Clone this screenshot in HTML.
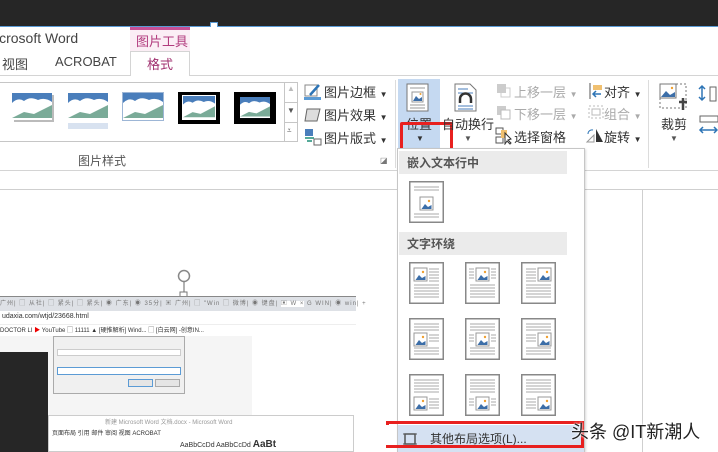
<!DOCTYPE html>
<html><head><meta charset="utf-8"><style>
*{margin:0;padding:0;box-sizing:border-box}
body{width:718px;height:452px;overflow:hidden;background:#fff;position:relative;font-family:"Liberation Sans","Noto Sans CJK SC",sans-serif;color:#444;font-size:12px}
.a{position:absolute}
.t{position:absolute;white-space:nowrap}
.pi{position:absolute;width:35px;height:42px}
</style></head><body>
<div class="a" style="left:0;top:0;width:718px;height:26px;background:#262626"></div>
<div class="a" style="left:0;top:26px;width:718px;height:1px;background:#5b9bd5"></div>
<div class="a" style="left:210px;top:22px;width:8px;height:8px;border:1px solid #5b9bd5;background:#fff"></div>
<div class="a" style="left:0;top:27px;width:718px;height:48px;background:#fff"></div>
<div class="t" style="left:-4px;top:30px;font-size:14px;color:#444">icrosoft Word</div>
<div class="a" style="left:130px;top:27px;width:60px;height:3px;background:#c64f95"></div>
<div class="a" style="left:130px;top:30px;width:60px;height:22px;background:#fbeef5"></div>
<div class="t" style="left:136px;top:31px;font-size:13px;color:#b23c7e">图片工具</div>
<div class="t" style="left:2px;top:54px;font-size:13px">视图</div>
<div class="t" style="left:55px;top:54px;font-size:13px">ACROBAT</div>
<div class="a" style="left:130px;top:51px;width:60px;height:25px;background:#fff;border:1px solid #d4d4d4;border-bottom:none"></div>
<div class="t" style="left:147px;top:54px;font-size:13px;color:#a0306f">格式</div>
<div class="a" style="left:0;top:75px;width:130px;height:1px;background:#d4d4d4"></div>
<div class="a" style="left:190px;top:75px;width:528px;height:1px;background:#d4d4d4"></div>
<div class="a" style="left:0;top:170px;width:718px;height:1px;background:#d4d4d4"></div>
<div class="a" style="left:0;top:189px;width:718px;height:1px;background:#cfcfcf"></div>
<!-- gallery -->
<div class="a" style="left:0;top:82px;width:298px;height:60px;border:1px solid #c6c6c6;border-left:none"></div>
<div class="a" style="left:284px;top:82px;width:1px;height:60px;background:#c6c6c6"></div>
<div class="a" style="left:285px;top:102px;width:13px;height:1px;background:#c6c6c6"></div>
<div class="a" style="left:285px;top:122px;width:13px;height:1px;background:#c6c6c6"></div>
<div class="t" style="left:287px;top:84px;font-size:8px;color:#bbb">▲</div>
<div class="t" style="left:287px;top:106px;font-size:8px;color:#555">▼</div>
<div class="t" style="left:287px;top:126px;font-size:8px;color:#555">⩡</div>
<svg class="a" style="left:10px;top:92px" width="270" height="40">
<defs><g id="ph"><rect width="40" height="27" fill="#4a7ebb"/><path d="M0 10 Q6 4 12 8 Q18 3 26 7 Q33 4 40 9 V27 H0Z" fill="#fff"/><path d="M0 25 L12 19 L22 21 L40 12 V25Z" fill="#7aab98"/></g></defs>
<g transform="translate(2,1)"><rect x="2" y="2" width="40" height="27" fill="#bbb"/><use href="#ph"/></g>
<g transform="translate(58,1)"><use href="#ph"/><rect y="30" width="40" height="6" fill="#c8d6ea" opacity=".7"/></g>
<g transform="translate(113,1)"><rect x="-1" y="-1" width="42" height="29" fill="#9db6d6"/><use href="#ph"/></g>
<g transform="translate(168,-1)"><rect width="42" height="33" fill="#000"/><rect x="4" y="4" width="34" height="25" fill="#fff"/><g transform="translate(5,5) scale(.8,.85)"><use href="#ph"/></g></g>
<g transform="translate(224,-1)"><rect width="42" height="33" fill="#000"/><g transform="translate(6,6) scale(.75,.78)"><use href="#ph"/></g></g>
</svg>
<div class="t" style="left:78px;top:152px;font-size:12px;color:#555">图片样式</div>
<div class="t" style="left:380px;top:156px;font-size:8px;color:#777">◪</div>
<!-- picture buttons -->
<svg class="a" style="left:304px;top:83px" width="18" height="18"><rect x="1" y="2" width="12" height="11" fill="none" stroke="#888"/><path d="M6 12 L15 2" stroke="#2e75b6" stroke-width="2.5"/><rect x="0" y="14" width="17" height="3" fill="#5b9bd5"/></svg>
<div class="t" style="left:324px;top:82px;font-size:13px;color:#333">图片边框 <span style="font-size:8px">▼</span></div>
<svg class="a" style="left:304px;top:106px" width="18" height="18"><path d="M3 3 H16 L13 15 H1Z" fill="#ddd" stroke="#666"/></svg>
<div class="t" style="left:324px;top:105px;font-size:13px;color:#333">图片效果 <span style="font-size:8px">▼</span></div>
<svg class="a" style="left:304px;top:128px" width="18" height="18"><rect x="1" y="1" width="8" height="7" fill="#4a7ebb"/><path d="M1 10 H10 M3 13 H8" stroke="#5a9" stroke-width="2"/><rect x="10" y="11" width="7" height="6" fill="none" stroke="#666"/></svg>
<div class="t" style="left:324px;top:128px;font-size:13px;color:#333">图片版式 <span style="font-size:8px">▼</span></div>
<div class="a" style="left:395px;top:80px;width:1px;height:88px;background:#dcdcdc"></div>
<!-- position button -->
<div class="a" style="left:398px;top:79px;width:42px;height:70px;background:#c5d9f1"></div>
<svg class="a" style="left:406px;top:83px" width="24" height="30"><rect x="1" y="1" width="21" height="27" fill="#fff" stroke="#777"/><path d="M4 5H19M4 22H19M4 25H19" stroke="#999"/><rect x="6" y="9" width="11" height="10" fill="#fff" stroke="#999"/><path d="M7 18 L10 13 L13 16 L16 14 V18Z" fill="#3c6ea8"/><circle cx="14.5" cy="11" r="1" fill="#f0a030"/></svg>
<div class="t" style="left:406px;top:114px;font-size:13px;color:#333">位置</div>
<div class="t" style="left:416px;top:134px;font-size:8px;color:#333">▼</div>
<div class="a" style="left:400px;top:122px;width:53px;height:30px;border:3px solid #e8201f;border-radius:2px"></div>
<svg class="a" style="left:454px;top:83px" width="24" height="30"><path d="M1 1H16L22 7V28H1Z" fill="#fff" stroke="#777"/><path d="M4 6H14M4 10H19M4 23H19M4 26H19" stroke="#4a7ebb"/><path d="M6 20 V16 A5.5 5.5 0 0 1 17 16 V20" fill="none" stroke="#333" stroke-width="2.5"/></svg>
<div class="t" style="left:442px;top:114px;font-size:13px;color:#333">自动换行</div>
<div class="t" style="left:464px;top:134px;font-size:8px;color:#555">▼</div>
<svg class="a" style="left:496px;top:83px" width="16" height="16"><rect x="1" y="1" width="9" height="9" fill="#ccc"/><rect x="5" y="5" width="9" height="9" fill="none" stroke="#ccc"/></svg>
<div class="t" style="left:514px;top:82px;font-size:13px;color:#aaa">上移一层 <span style="font-size:8px">▼</span></div>
<svg class="a" style="left:496px;top:105px" width="16" height="16"><rect x="1" y="1" width="9" height="9" fill="#ccc"/><rect x="5" y="5" width="9" height="9" fill="#fff" stroke="#bbb"/></svg>
<div class="t" style="left:514px;top:104px;font-size:13px;color:#aaa">下移一层 <span style="font-size:8px">▼</span></div>
<svg class="a" style="left:495px;top:127px" width="18" height="18"><rect x="1" y="1" width="7" height="6" fill="none" stroke="#555"/><rect x="1" y="10" width="7" height="6" fill="none" stroke="#555"/><rect x="6" y="3" width="6" height="8" fill="#f0c070"/><path d="M10 6 L10 17 L12 14 L15 17 L16 16 L13 13 L16 12Z" fill="#fff" stroke="#333"/></svg>
<div class="t" style="left:514px;top:127px;font-size:13px;color:#333">选择窗格</div>
<svg class="a" style="left:588px;top:82px" width="16" height="18"><path d="M2 1V17" stroke="#555"/><rect x="5" y="3" width="9" height="5" fill="#f0c070"/><path d="M13 12H5 M8 9 L5 12 L8 15" stroke="#2e75b6" fill="none" stroke-width="1.5"/></svg>
<div class="t" style="left:604px;top:82px;font-size:13px;color:#333">对齐 <span style="font-size:8px">▼</span></div>
<svg class="a" style="left:587px;top:104px" width="18" height="16"><rect x="2" y="2" width="14" height="12" fill="none" stroke="#bbb" stroke-dasharray="2 2"/><rect x="5" y="5" width="8" height="6" fill="none" stroke="#bbb"/></svg>
<div class="t" style="left:604px;top:104px;font-size:13px;color:#aaa">组合 <span style="font-size:8px">▼</span></div>
<svg class="a" style="left:586px;top:127px" width="18" height="16"><path d="M1 15 L8 8 V15Z" fill="none" stroke="#999"/><path d="M10 15 L10 2 L17 15Z" fill="#333"/><path d="M2 7 A4 4 0 0 1 7 3" stroke="#2e75b6" fill="none"/></svg>
<div class="t" style="left:604px;top:127px;font-size:13px;color:#333">旋转 <span style="font-size:8px">▼</span></div>
<div class="a" style="left:648px;top:80px;width:1px;height:88px;background:#dcdcdc"></div>
<svg class="a" style="left:659px;top:83px" width="30" height="30"><rect x="1" y="1" width="26" height="24" fill="none" stroke="#777" stroke-dasharray="2 2"/><rect x="1" y="1" width="16" height="14" fill="#fff" stroke="#777"/><path d="M2 14 L7 8 L11 12 L16 9 V14Z" fill="#3c6ea8"/><circle cx="13" cy="5" r="1.2" fill="#f0a030"/><path d="M20 19 H28 M24 15 V27" stroke="#444" stroke-width="2.5"/></svg>
<div class="t" style="left:661px;top:114px;font-size:13px;color:#333">裁剪</div>
<div class="t" style="left:670px;top:134px;font-size:8px;color:#555">▼</div>
<svg class="a" style="left:697px;top:84px" width="21" height="50"><path d="M5 2V16 M2 5L5 2L8 5 M2 13L5 16L8 13" stroke="#2e75b6" fill="none" stroke-width="1.5"/><rect x="13" y="3" width="6" height="14" fill="none" stroke="#666"/><rect x="3" y="32" width="18" height="6" fill="none" stroke="#666"/><path d="M3 46H20 M6 43L3 46L6 49 M17 43L20 46L17 49" stroke="#2e75b6" fill="none" stroke-width="1.5"/></svg>
<!-- document -->
<div class="a" style="left:642px;top:190px;width:1px;height:262px;background:#cfcfcf"></div>
<svg class="a" style="left:176px;top:268px" width="16" height="32"><circle cx="8" cy="8" r="5.5" fill="none" stroke="#888" stroke-width="1.5"/><path d="M8 14V26" stroke="#666"/><rect x="4" y="24" width="7" height="7" fill="#fff" stroke="#777"/></svg>
<div class="a" style="left:0;top:296px;width:356px;height:156px;background:#fff;border-top:1px solid #888"></div>
<div class="a" style="left:0;top:297px;width:356px;height:14px;background:#dee1e6"></div>
<div class="t" style="left:0;top:298px;font-size:6px;color:#777;letter-spacing:1px">广州| ▢ 从社| ▢ 紧头| ▢ 紧头| ◉ 广东| ◉ 35分| ▣ 广州| ▢ "Win ▢ 微博| ◉ 键盘| <span style="background:#fff">▣ W ×</span> G WIN| ◉ win|  +</div>
<div class="a" style="left:0;top:311px;width:356px;height:14px;background:#fff;border-bottom:1px solid #eee"></div>
<div class="t" style="left:2px;top:313px;font-size:7px;color:#333">udaxia.com/wtjd/23668.html</div>
<div class="t" style="left:0;top:325px;font-size:6px;color:#333">DOCTOR LI  <span style="color:#e00">▶</span> YouTube  ▢ 11111  ▲ [硬推解析] Wind...  ▢ [白云网] -创意IN...</div>
<div class="a" style="left:0;top:336px;width:356px;height:116px;background:#f5f5f5"></div>
<div class="a" style="left:252px;top:336px;width:104px;height:116px;background:#fff"></div>
<div class="a" style="left:0;top:352px;width:48px;height:100px;background:#262626"></div>
<div class="a" style="left:53px;top:336px;width:132px;height:58px;background:#f0f0f0;border:1px solid #aaa"></div>
<div class="a" style="left:57px;top:349px;width:124px;height:7px;background:#fff;border:1px solid #ccc"></div>
<div class="a" style="left:57px;top:367px;width:124px;height:8px;background:#fff;border:1px solid #5b9bd5"></div>
<div class="a" style="left:128px;top:379px;width:25px;height:8px;background:#e5e5e5;border:1px solid #5b9bd5"></div>
<div class="a" style="left:155px;top:379px;width:25px;height:8px;background:#e5e5e5;border:1px solid #aaa"></div>
<div class="a" style="left:48px;top:415px;width:306px;height:37px;background:#fff;border:1px solid #ccc"></div>
<div class="t" style="left:105px;top:417px;font-size:6px;color:#999">新建 Microsoft Word 文档.docx - Microsoft Word</div>
<div class="t" style="left:52px;top:428px;font-size:6px;color:#333">页面布局   引用   邮件   审阅   视图   ACROBAT</div>
<div class="t" style="left:180px;top:439px;font-size:7px;color:#333">AaBbCcDd  AaBbCcDd <b style="font-size:10px">AaBt</b></div>
<!-- dropdown -->
<div class="a" style="left:397px;top:148px;width:188px;height:304px;background:#fff;border:1px solid #c6c6c6;box-shadow:1px 1px 2px rgba(0,0,0,.15)"></div>
<div class="a" style="left:399px;top:151px;width:168px;height:23px;background:#ebebeb"></div>
<div class="t" style="left:407px;top:154px;font-size:12px;color:#555;font-weight:bold">嵌入文本行中</div>
<div class="a" style="left:399px;top:232px;width:168px;height:23px;background:#ebebeb"></div>
<div class="t" style="left:407px;top:235px;font-size:12px;color:#555;font-weight:bold">文字环绕</div>
<svg width="0" height="0" style="position:absolute"><defs>
<g id="im"><rect width="13" height="13" fill="#fff" stroke="#999"/><path d="M1.5 12 L5 7 L8 10 L11.5 8 V12Z" fill="#3c6ea8"/><circle cx="9" cy="4" r="1.2" fill="#f0a030"/></g>
<g id="pg"><rect x=".75" y=".75" width="33.5" height="40.5" fill="#fff" stroke="#888" stroke-width="1.5"/></g>
</defs></svg>
<svg class="pi" style="left:409px;top:181px"><use href="#pg"/><path d="M5 6H30M5 9H30M5 33H30M5 36H30" stroke="#aaa"/><use href="#im" x="11" y="16"/></svg>
<svg class="pi" style="left:409px;top:262px"><use href="#pg"/><path d="M20 7H30M20 10H30M20 13H30M20 16H30M20 19H30M5 23H30M5 26H30M5 29H30M5 32H30M5 35H30" stroke="#aaa"/><use href="#im" x="5" y="6"/></svg>
<svg class="pi" style="left:465px;top:262px"><use href="#pg"/><path d="M4 7H9M26 7H31M4 10H9M26 10H31M4 13H9M26 13H31M4 16H9M26 16H31M5 23H30M5 26H30M5 29H30M5 32H30M5 35H30" stroke="#aaa"/><use href="#im" x="11" y="6"/></svg>
<svg class="pi" style="left:521px;top:262px"><use href="#pg"/><path d="M5 7H15M5 10H15M5 13H15M5 16H15M5 19H15M5 23H30M5 26H30M5 29H30M5 32H30M5 35H30" stroke="#aaa"/><use href="#im" x="17" y="6"/></svg>
<svg class="pi" style="left:409px;top:318px"><use href="#pg"/><path d="M5 6H30M5 9H30M5 12H30M20 17H30M20 20H30M20 23H30M5 30H30M5 33H30M5 36H30" stroke="#aaa"/><use href="#im" x="5" y="15"/></svg>
<svg class="pi" style="left:465px;top:318px"><use href="#pg"/><path d="M5 6H30M5 9H30M5 12H30M4 17H9M26 17H31M4 20H9M26 20H31M4 23H9M26 23H31M5 30H30M5 33H30M5 36H30" stroke="#aaa"/><use href="#im" x="11" y="15"/></svg>
<svg class="pi" style="left:521px;top:318px"><use href="#pg"/><path d="M5 6H30M5 9H30M5 12H30M5 17H15M5 20H15M5 23H15M5 30H30M5 33H30M5 36H30" stroke="#aaa"/><use href="#im" x="17" y="15"/></svg>
<svg class="pi" style="left:409px;top:374px"><use href="#pg"/><path d="M5 6H30M5 9H30M5 12H30M5 15H30M5 18H30M20 25H30M20 28H30M20 31H30M20 34H30" stroke="#aaa"/><use href="#im" x="5" y="23"/></svg>
<svg class="pi" style="left:465px;top:374px"><use href="#pg"/><path d="M5 6H30M5 9H30M5 12H30M5 15H30M5 18H30M4 25H9M26 25H31M4 28H9M26 28H31M4 31H9M26 31H31" stroke="#aaa"/><use href="#im" x="11" y="23"/></svg>
<svg class="pi" style="left:521px;top:374px"><use href="#pg"/><path d="M5 6H30M5 9H30M5 12H30M5 15H30M5 18H30M5 25H15M5 28H15M5 31H15M5 34H15" stroke="#aaa"/><use href="#im" x="17" y="23"/></svg>
<div class="a" style="left:398px;top:425px;width:186px;height:27px;background:#d5e1f2"></div>
<svg class="a" style="left:403px;top:432px" width="14" height="14"><rect x="2" y="2" width="10" height="10" fill="none" stroke="#555" stroke-width="1.5"/><path d="M0 2H14M0 12H14" stroke="#555"/></svg>
<div class="t" style="left:430px;top:430px;font-size:12px;color:#333">其他布局选项(L)...</div>
<div class="a" style="left:386px;top:421px;width:198px;height:27px;border:3px solid #e8201f;border-left:none"></div>
<div class="a" style="left:386px;top:421px;width:3px;height:4px;background:#e8201f"></div>
<div class="t" style="left:571px;top:418px;font-size:18px;color:#222;text-shadow:0 0 2px #fff,0 0 2px #fff">头条 @IT新潮人</div>
</body></html>
